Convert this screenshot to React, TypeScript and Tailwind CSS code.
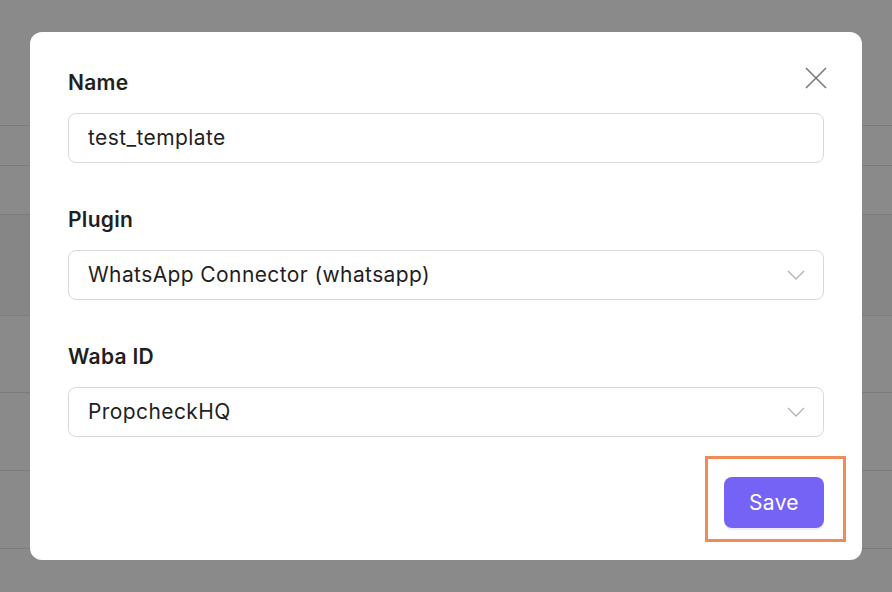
const bgLines = [125, 165, 214, 315, 392, 470, 548]

const Chevron = () => (
  <svg width="18" height="10" viewBox="0 0 18 10" fill="none" className="text-[#b3b3b3]">
    <path d="M1 1l8 8 8-8" stroke="currentColor" strokeWidth="1.3" />
  </svg>
)

const Field = ({ label, value, select }: { label: string; value: string; select?: boolean }) => {
  return (
    <div className="flex flex-col">
      <label className="mb-[18px] h-6 text-[21px] leading-6 font-semibold tracking-[0.3px] text-[#1f1f1f]">{label}</label>
      <div className="flex h-[50px] items-center justify-between rounded-[8px] border border-[#d9d9d9] bg-white pl-[19px] pr-[18px]">
        <span className="text-[21px] tracking-[0.4px] text-[#1f1f1f]">{value}</span>
        {select && <Chevron />}
      </div>
    </div>
  )
}

export default function App() {
  return (
    <div className="relative h-[592px] w-[892px] overflow-hidden bg-[#8a8a8a]" style={{ fontFamily: 'Inter, "Liberation Sans", sans-serif' }}>
      {bgLines.map((y) => (
        <div key={y} className="absolute left-0 h-px w-full bg-[#7b7b7b]" style={{ top: y }} />
      ))}
      <div className="absolute left-0 top-[215px] h-[100px] w-full bg-[#868686]" />

      <div className="relative ml-[30px] mt-[32px] flex h-[528px] w-[832px] flex-col rounded-[12px] bg-white px-[38px] pt-[39px] pb-[32px]">
        <button className="absolute left-[775px] top-[35px] text-[#7a7a7a]">
          <svg width="22" height="22" viewBox="0 0 22 22" fill="none">
            <path d="M1 1l20 20M21 1L1 21" stroke="currentColor" strokeWidth="1.6" />
          </svg>
        </button>
        <div className="flex flex-col gap-[45px]">
          <Field label="Name" value="test_template" />
          <Field label="Plugin" value="WhatsApp Connector (whatsapp)" select />
          <Field label="Waba ID" value="PropcheckHQ" select />
        </div>
        <div className="mt-auto flex justify-end">
          <div className="relative">
            <button className="h-[51px] w-[100px] rounded-[8px] bg-[#7563f5] text-[21px] tracking-[0.3px] text-white shadow-[0_2px_0_#eeeaff]">Save</button>
            <div className="absolute -left-[19px] -top-[21px] h-[86px] w-[141px] border-[3px] border-[#ef8c55]" />
          </div>
        </div>
      </div>
    </div>
  )
}
